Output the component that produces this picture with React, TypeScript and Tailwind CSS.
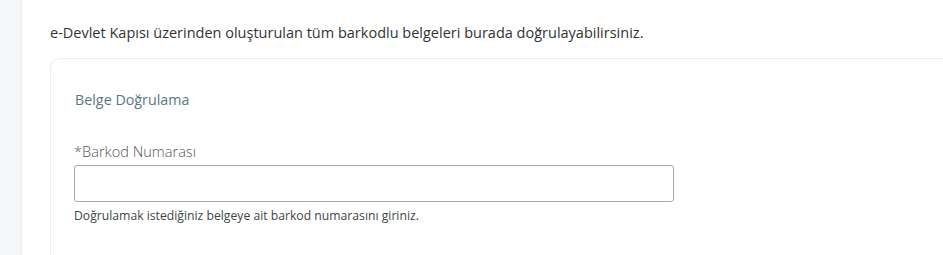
export default function App() {
  return (
    <div className="flex min-h-[255px] w-[943px] bg-white font-['Open_Sans',sans-serif] overflow-hidden">
      <div className="w-[22px] shrink-0 bg-[#f5f6f7] border-r border-[#eceef0]" />
      <div className="flex-1 pl-[28px]">
        <p className="mt-[22px] text-[14.5px] leading-[22px] text-[#333]">
          e-Devlet Kapısı üzerinden oluşturulan tüm barkodlu belgeleri burada doğrulayabilirsiniz.
        </p>
        <div className="mt-[14px] rounded-tl-[10px] border-t border-l border-[#ececec] pl-[23px] pt-[31px] pb-8">
          <h2 className="pl-px text-[14.3px] leading-[20px] text-[#5b7886]">Belge Doğrulama</h2>
          <label className="mt-[31px] block text-[14.6px] leading-[20px] font-light text-[#555]">
            *Barkod Numarası
          </label>
          <input
            type="text"
            className="mt-[4px] block h-[37px] w-[600px] rounded-[3px] border border-[#a9a9a9] bg-white px-2 text-[14px] outline-none"
          />
          <p className="mt-[5px] text-[12.2px] leading-[18px] text-[#444]">
            Doğrulamak istediğiniz belgeye ait barkod numarasını giriniz.
          </p>
        </div>
      </div>
    </div>
  );
}
